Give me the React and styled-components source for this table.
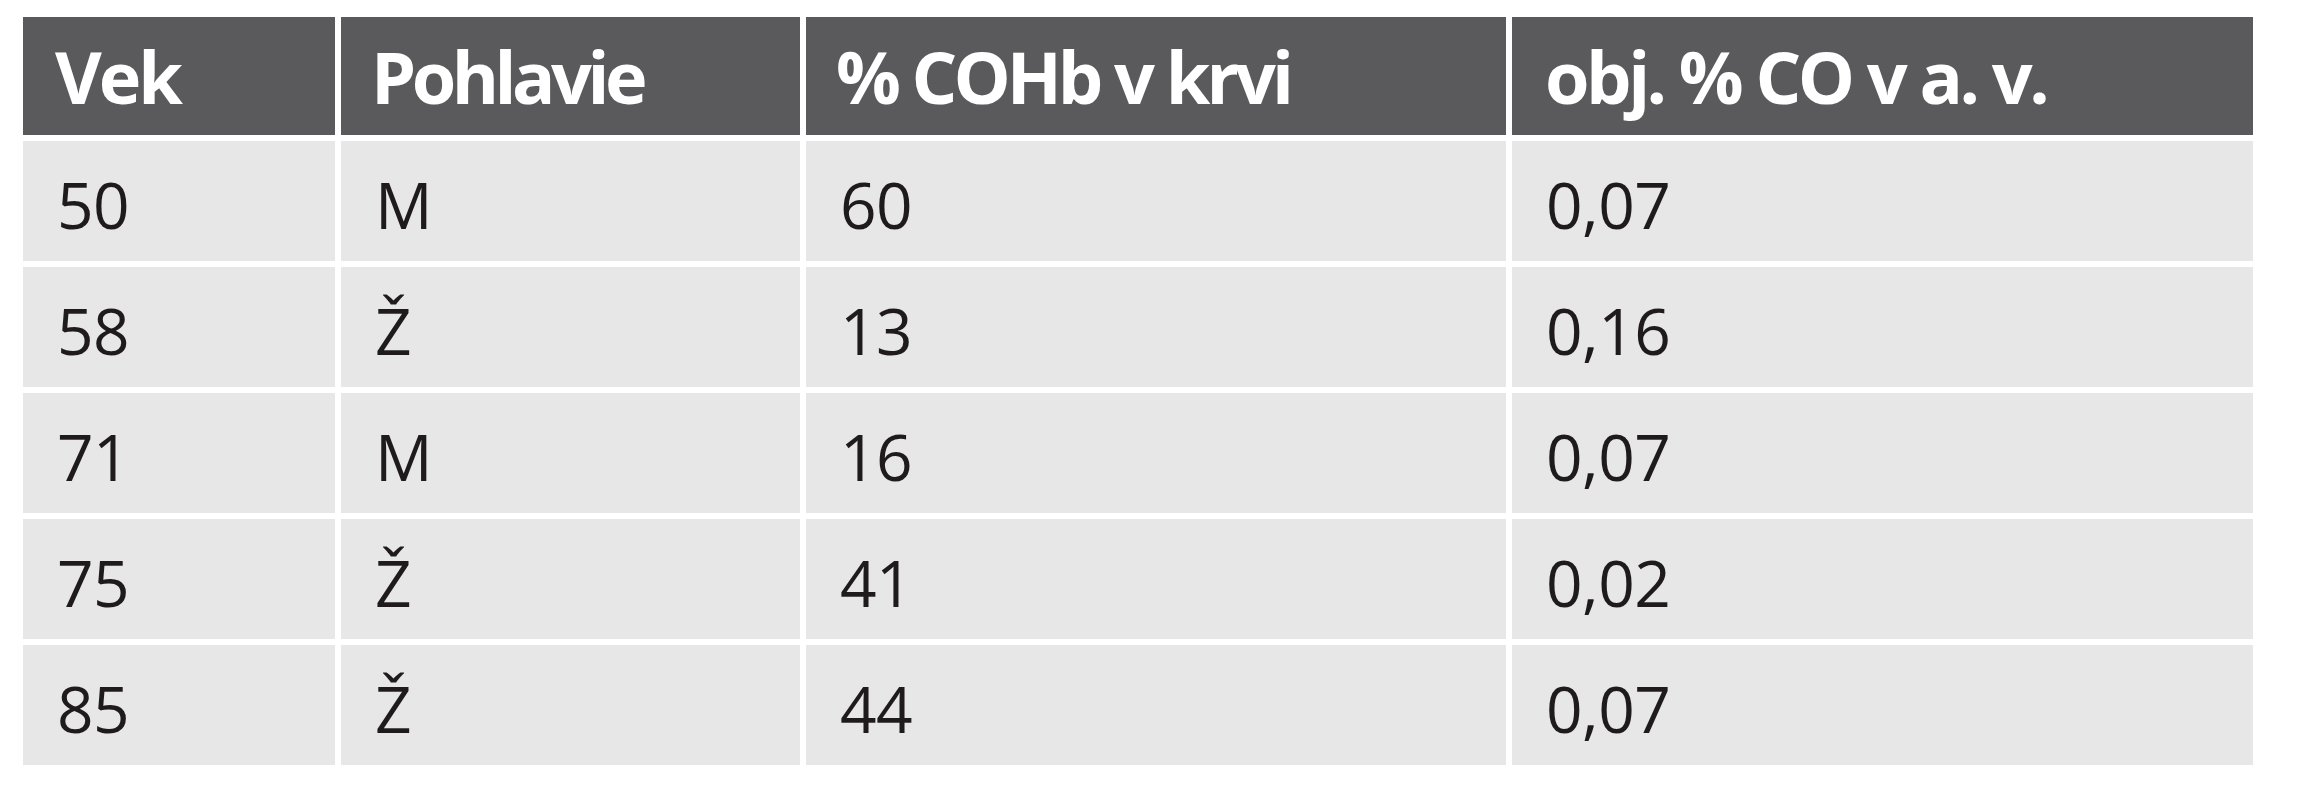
import React from 'react';
import styled, {createGlobalStyle} from 'styled-components';

const GlobalStyle = createGlobalStyle`
    html, body {
        margin: 0;
        padding: 0;
        background: #ffffff;
    }
    body {
        font-family: "Open Sans", "Noto Sans", sans-serif;
    }
`;

const Page = styled.div`
    width: 2300px;
    height: 800px;
    padding: 17px 0 0 23px;
    box-sizing: border-box;
    background: #ffffff;
`;

const Table = styled.div`
    display: grid;
    grid-template-columns: 312px 459px 700px 741px;
    grid-template-rows: 118px repeat(5, 120px);
    column-gap: 6px;
    row-gap: 6px;
    width: max-content;
`;

const HeadCell = styled.div`
    display: flex;
    align-items: center;
    padding-left: ${props => props.$pad || 30}px;
    background: #5a595b;
    color: #ffffff;
    font-size: 72px;
    font-weight: 700;
    line-height: 1;
    letter-spacing: ${props => props.$spacing}px;
    white-space: nowrap;
`;

const Cell = styled.div`
    display: flex;
    align-items: center;
    padding: 7px 0 0 34px;
    background: #e7e7e7;
    color: #1f1b1c;
    font-size: 64px;
    line-height: 1;
    letter-spacing: -0.5px;
    white-space: nowrap;
`;

const headers = [
    {label: 'Vek', spacing: -3, pad: 32},
    {label: 'Pohlavie', spacing: -4.5, pad: 30},
    {label: '% COHb v krvi', spacing: -4},
    {label: 'obj. % CO v a. v.', spacing: -3.5, pad: 33},
];

const rows = [
    ['50', 'M', '60', '0,07'],
    ['58', 'Ž', '13', '0,16'],
    ['71', 'M', '16', '0,07'],
    ['75', 'Ž', '41', '0,02'],
    ['85', 'Ž', '44', '0,07'],
];

function App()
{
    return <Page>
        <GlobalStyle />
        <Table>
            {headers.map(h => (
                <HeadCell key={h.label} $spacing={h.spacing} $pad={h.pad}>{h.label}</HeadCell>
            ))}
            {rows.map((row, i) => row.map((value, j) => (
                <Cell key={i + '-' + j}>{value}</Cell>
            )))}
        </Table>
    </Page>
}

export default App;
